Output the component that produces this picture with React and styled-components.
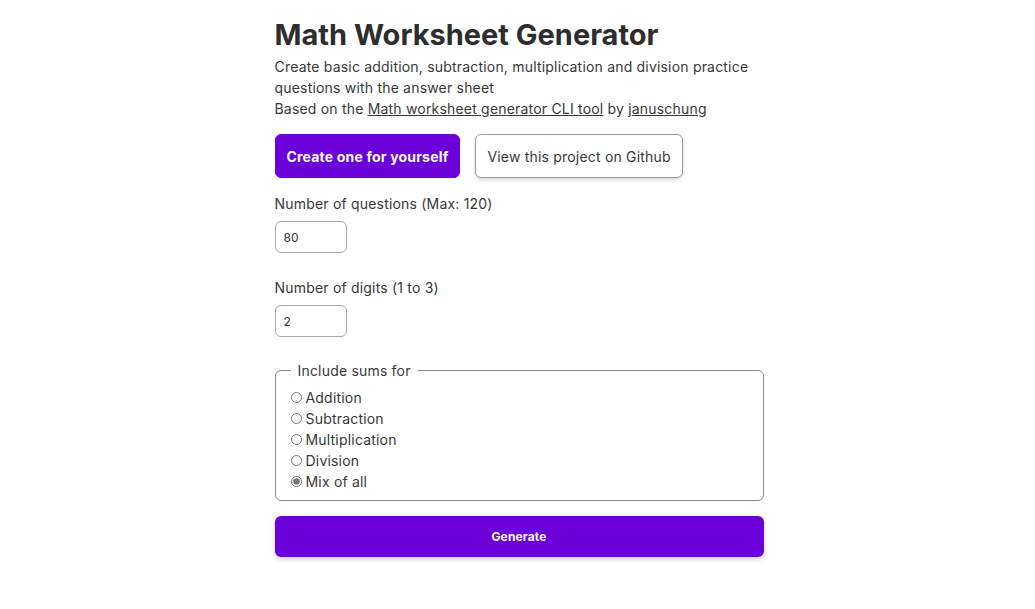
import React, { useState } from "react";
import styled, { createGlobalStyle } from "styled-components";

const GlobalStyle = createGlobalStyle`
  body {
    margin: 0;
    background: #fff;
    font-family: Inter, "Noto Sans", sans-serif;
    color: #333;
    letter-spacing: 0.012em;
  }
`;

const Page = styled.main`
  width: 489px;
  margin: 0 auto;
  padding: 16px 0 40px 3px;
`;

const Title = styled.h1`
  margin: 0;
  font-size: 29px;
  font-weight: 700;
  line-height: 38px;
  letter-spacing: 0;
  color: #2d2d2d;
`;

const Intro = styled.p`
  margin: 2px 0 0;
  font-size: 14px;
  line-height: 21px;
  color: #383838;

  a {
    color: #383838;
    text-decoration: underline;
  }
`;

const ButtonRow = styled.div`
  display: flex;
  gap: 15px;
  margin-top: 15px;
`;

const LinkButton = styled.a`
  display: inline-flex;
  align-items: center;
  justify-content: center;
  height: 44px;
  box-sizing: border-box;
  padding: 0 11px;
  border-radius: 6px;
  font-size: 14px;
  text-decoration: none;
  font-weight: ${(p) => (p.$primary ? 700 : 400)};
  color: ${(p) => (p.$primary ? "#fff" : "#383838")};
  background: ${(p) => (p.$primary ? "#6b00d8" : "#fff")};
  border: 1px solid ${(p) => (p.$primary ? "#6b00d8" : "#9a9a9a")};
  box-shadow: ${(p) => (p.$primary ? "none" : "0 2px 4px rgba(0,0,0,0.15)")};
`;

const Field = styled.div`
  margin-top: ${(p) => p.$top || 15}px;
`;

const Label = styled.label`
  display: block;
  font-size: 14px;
  line-height: 21px;
  color: #383838;
`;

const NumberInput = styled.input`
  display: block;
  margin-top: 7px;
  width: 72px;
  height: 32px;
  box-sizing: border-box;
  padding: 0 8px;
  border: 1px solid #a8a8a8;
  border-radius: 6px;
  font-family: Inter, sans-serif;
  font-size: 12px;
  color: #333;
  &:focus {
    outline: none;
  }
`;

const Group = styled.fieldset`
  margin: 25px 0 0;
  padding: 8px 15px 8px;
  border: 1px solid #8a8a8a;
  border-radius: 6px;
  display: flex;
  flex-direction: column;
`;

const Legend = styled.legend`
  font-size: 14px;
  padding: 0 7px;
  margin-left: 0;
  color: #383838;
`;

const RadioRow = styled.label`
  display: flex;
  align-items: center;
  height: 21px;
  font-size: 14px;
  color: #383838;

  input {
    margin: 0 4px 0 0;
    width: 11px;
    height: 11px;
    accent-color: #777;
  }
`;

const Generate = styled.button`
  margin-top: 15px;
  width: 100%;
  height: 41px;
  border: none;
  border-radius: 6px;
  background: #6b00d8;
  color: #fff;
  font-family: Inter, sans-serif;
  font-size: 12px;
  font-weight: 700;
  letter-spacing: 0.012em;
  box-shadow: 0 2px 5px rgba(0, 0, 0, 0.2);
  cursor: pointer;
`;

const OPTIONS = ["Addition", "Subtraction", "Multiplication", "Division", "Mix of all"];

export default function App() {
  const [form, setForm] = useState({ questions: "80", digits: "2", type: "Mix of all" });

  const handleChange = (e) => {
    setForm((prev) => ({ ...prev, [e.target.name]: e.target.value }));
  };

  return (
    <>
      <GlobalStyle />
      <Page>
        <Title>Math Worksheet Generator</Title>
        <Intro>
          Create basic addition, subtraction, multiplication and division practice questions with the
          answer sheet
          <br />
          Based on the <a href="#">Math worksheet generator CLI tool</a> by <a href="#">januschung</a>
        </Intro>
        <ButtonRow>
          <LinkButton $primary href="#">Create one for yourself</LinkButton>
          <LinkButton href="#">View this project on Github</LinkButton>
        </ButtonRow>

        <Field>
          <Label htmlFor="questions">Number of questions (Max: 120)</Label>
          <NumberInput id="questions" name="questions" value={form.questions} onChange={handleChange} />
        </Field>

        <Field $top={24}>
          <Label htmlFor="digits">Number of digits (1 to 3)</Label>
          <NumberInput id="digits" name="digits" value={form.digits} onChange={handleChange} />
        </Field>

        <Group>
          <Legend>Include sums for</Legend>
          {OPTIONS.map((opt) => (
            <RadioRow key={opt}>
              <input
                type="radio"
                name="type"
                value={opt}
                checked={form.type === opt}
                onChange={handleChange}
              />
              {opt}
            </RadioRow>
          ))}
        </Group>

        <Generate type="button">Generate</Generate>
      </Page>
    </>
  );
}
